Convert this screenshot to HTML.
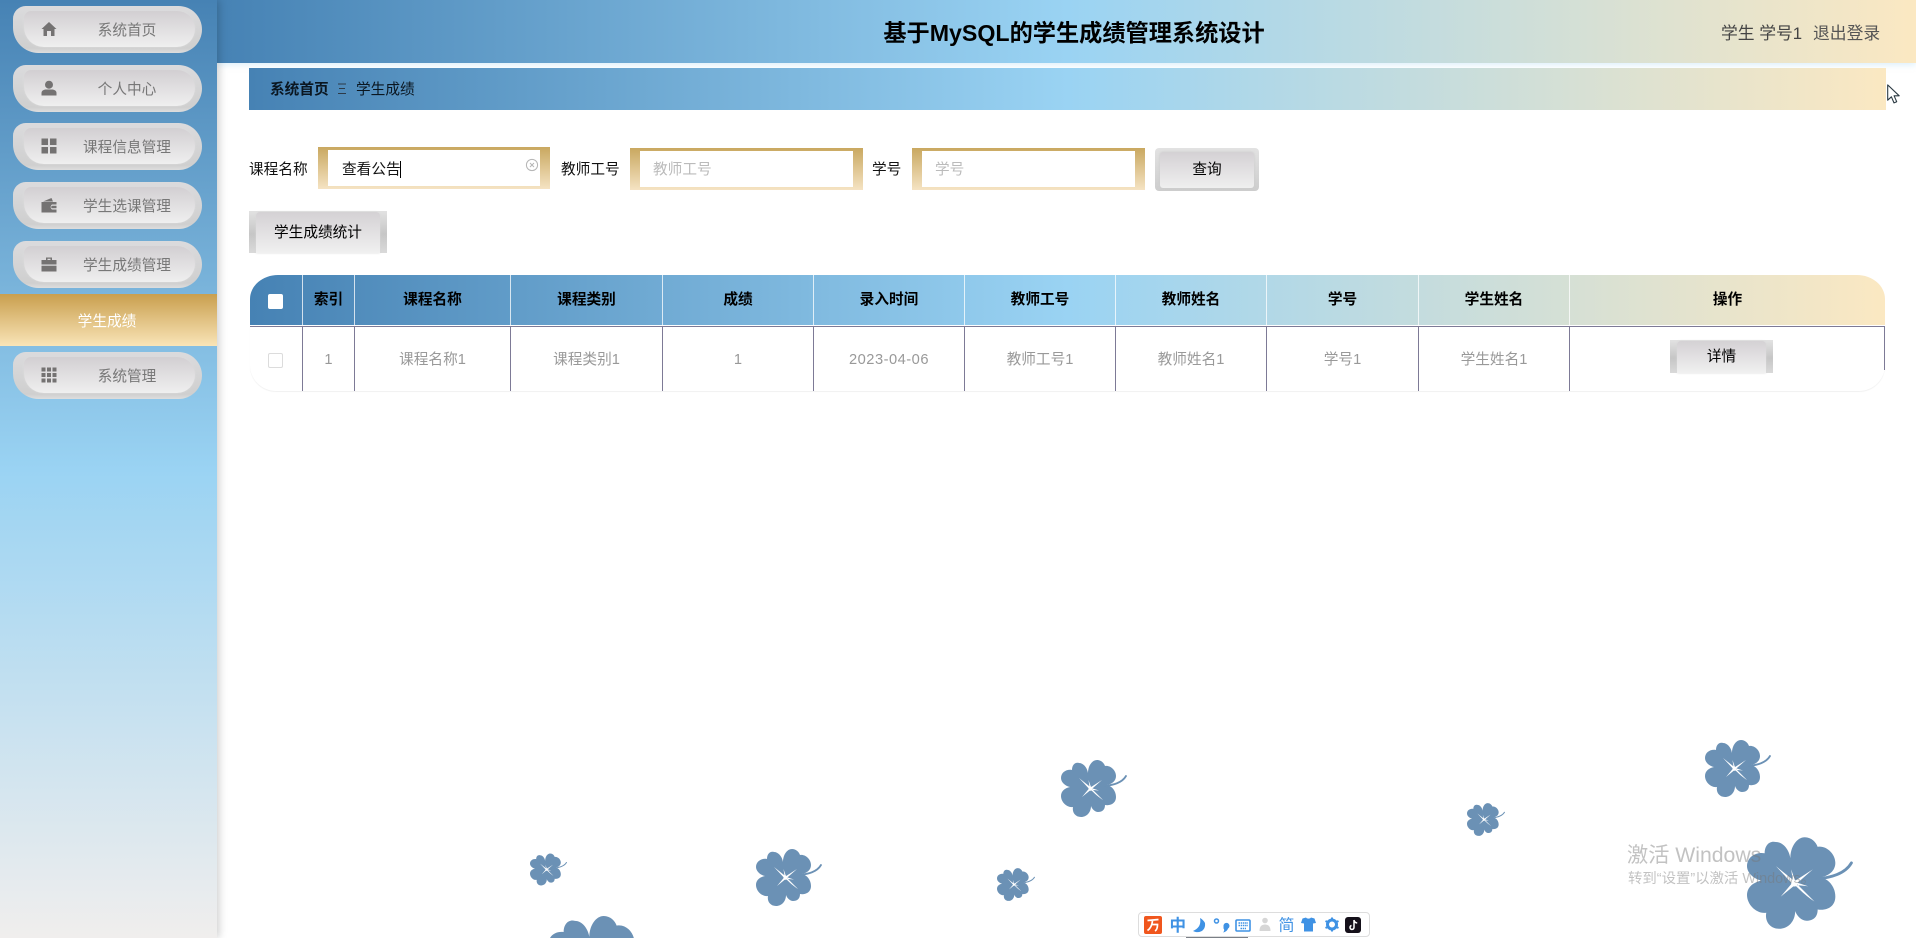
<!DOCTYPE html>
<html lang="zh"><head><meta charset="utf-8"><title>学生成绩</title>
<style>
*{box-sizing:border-box;margin:0;padding:0}
html,body{width:1916px;height:938px;overflow:hidden;background:#fff}
body{position:relative;font-family:"Liberation Sans","Noto Sans CJK SC",sans-serif;font-size:14.67px;color:#000}
.a{position:absolute;white-space:nowrap}
#side{position:absolute;left:0;top:0;width:217px;height:938px;background:linear-gradient(180deg,#4682b4 0,#9ad3f3 50%,#f0eeed 100%);box-shadow:2px 0 8px rgba(0,0,0,.2)}
.grad{background:linear-gradient(90deg,#4682b4 0,#9ad3f3 50%,#fbe8c2 100%)}
.nav{position:absolute;left:13px;width:189px;height:47px;border-radius:13px 24px 24px 26px;background:linear-gradient(180deg,#dbdbdd,#cfcfcf 90%,#dedede)}
.nav::before{content:"";position:absolute;left:11px;top:5px;right:7px;bottom:6px;border-radius:8px 20px 20px 22px;background:linear-gradient(180deg,#d2cfd2,#efefef);box-shadow:0 0 2px #dcdcdc}
.nav span{position:absolute;left:0;top:0;width:228px;height:47px;line-height:50px;text-align:center;color:#777;z-index:1}
.nav svg{position:absolute;left:28px;top:15px;width:16px;height:16px;fill:#747272;z-index:1}
.inp{position:absolute;height:42px;background:linear-gradient(180deg,#c9a860,#f5e3c3)}
.inp i{position:absolute;left:10px;right:10px;top:3px;bottom:3px;background:#fff}
.ph{color:#bbb}
.bev{position:absolute;background:linear-gradient(180deg,#e2e2e2,#c6c6c6 55%,#d9d9d9)}
.bev::before{content:"";position:absolute;left:7px;right:7px;top:1px;bottom:0;border-radius:4px 4px 0 0;background:linear-gradient(180deg,#d4d1d4,#f0f0f0);box-shadow:0 0 2px #d8d8d8}
.bev span{position:absolute;left:0;right:0;top:0;bottom:0;text-align:center;z-index:1}
.th,.td{position:absolute;text-align:center;white-space:nowrap}
.th{top:275px;height:50px;line-height:50px;font-weight:700;border-right:1px solid rgba(255,255,255,.75)}
.td{top:327px;height:64px;line-height:67px;color:#999;border-right:1.2px solid #7d7a96}
</style></head><body>
<svg width="0" height="0" style="position:absolute"><defs>
<symbol id="fl" viewBox="0 0 66 57">
<path fill="#6b91b5" d="M27 13C27 6 31 0 36 0C40 0 43 3 44 6C49 5 55 10 55 16C55 21 51 24 46 25C51 26 55 31 55 37C55 43 50 46 44 45C44 50 41 52 37 52C34 52 31 49 30 46C30 52 26 57 20 57C14 57 11 52 12 47C6 48 0 42 0 36C0 31 4 28 9 27C4 26 0 22 0 18C0 12 6 9 11 10C11 5 14 2 18 3C22 3 26 7 27 13Z"/>
<path fill="none" stroke="#6b91b5" stroke-width="1.8" stroke-linecap="round" d="M44 26C52 25 61 23 65 16"/>
<path fill="#fff" d="M18 18L30.200 27.800L28.600 29.400ZM41 20L30.200 29.500L28.800 27.900ZM21 37L30.200 29.500L28.500 28ZM42 40C38 37.500 33 33 29 29L30 28C34 32 38 36 42 40ZM38 30.500L29.500 27.700V29.700ZM27.500 20L30.300 28H28.700Z"/>
<circle cx="29.500" cy="28.700" r="2" fill="#fff"/>
</symbol></defs></svg>

<div class="a grad" style="left:217px;top:0;width:1699px;height:63px;box-shadow:0 2px 6px rgba(154,211,243,.35)"></div>
<div class="a" style="left:882px;top:15px;font-size:23.200px;line-height:36px;font-weight:700;width:384px;text-align:center">基于MySQL的学生成绩管理系统设计</div>
<div class="a" style="left:1721px;top:21px;font-size:16.800px;line-height:25px;color:#444">学生 学号1</div>
<div class="a" style="left:1813px;top:21px;font-size:16.800px;line-height:25px;color:#555">退出登录</div>

<div class="a grad" style="left:249px;top:68px;width:1637px;height:42px"></div>
<div class="a" style="left:270px;top:79px;line-height:22px;font-weight:700;color:#0a1620">系统首页</div>
<svg class="a" style="left:338px;top:83px" width="9" height="12"><path d="M0 1H8M1 5.500H7M0 10.500H8" stroke="#2d3a48" stroke-width="1"/></svg>
<div class="a" style="left:356px;top:79px;line-height:22px;color:#0a1620">学生成绩</div>

<svg class="a" style="left:1887px;top:84px" width="14" height="20" viewBox="0 0 14 20"><path d="M.7.900V16.200L4.400 12.800 7 18.900 9.700 17.700 7.100 11.800H12.200Z" fill="#fff" stroke="#2b3a42" stroke-width="1.100" stroke-linejoin="round"/></svg>

<!-- search row -->
<div class="a" style="left:249px;top:159px;line-height:22px;color:#111">课程名称</div>
<div class="inp" style="left:318px;top:147px;width:232px"><i></i></div>
<div class="a" style="left:342px;top:159px;line-height:22px;color:#111">查看公告</div>
<div class="a" style="left:399.500px;top:161px;width:1px;height:17px;background:#000"></div>
<svg class="a" style="left:525px;top:158px" width="14" height="14" viewBox="0 0 14 14"><circle cx="7" cy="7" r="5.600" fill="none" stroke="#b5b5b5" stroke-width="1"/><path d="M5 5L9 9M9 5L5 9" stroke="#b5b5b5" stroke-width="1"/></svg>
<div class="a" style="left:561px;top:159px;line-height:22px;color:#111">教师工号</div>
<div class="inp" style="left:630px;top:148px;width:233px"><i></i></div>
<div class="a ph" style="left:653px;top:159px;line-height:22px">教师工号</div>
<div class="a" style="left:872px;top:159px;line-height:22px;color:#111">学号</div>
<div class="inp" style="left:912px;top:148px;width:233px"><i></i></div>
<div class="a ph" style="left:935px;top:159px;line-height:22px">学号</div>

<div class="a" style="left:1155px;top:148px;width:104px;height:43px;border-radius:4px;background:linear-gradient(180deg,#e2e2e2,#cdcdcd)"></div>
<div class="a" style="left:1160px;top:152px;width:94px;height:36px;border-radius:3px;background:linear-gradient(180deg,#d4d1d4,#efefef);box-shadow:0 0 2px #c9c9c9"></div>
<div class="a" style="left:1155px;top:159px;width:104px;text-align:center;line-height:22px">查询</div>

<div class="bev" style="left:249px;top:211px;width:138px;height:42px"><span style="line-height:44px">学生成绩统计</span></div>

<!-- table -->
<div class="a" style="left:250px;top:275px;width:1635px;height:50px;border-radius:28px 28px 0 0/24px 24px 0 0;background:linear-gradient(90deg,#4682b4 0,#9ad3f3 50%,#fbe8c2 100%)"></div>
<div class="a" style="left:250px;top:325px;width:1635px;height:66px;border-radius:0 0 26px 26px;box-shadow:0 1px 1px rgba(0,0,0,.06);background:#fff"></div>
<div class="a" style="left:250px;top:326px;width:1635px;height:1.300px;background:#7d7a96"></div>
<div class="a" style="left:1884px;top:326px;width:1.200px;height:44px;background:#7d7a96"></div>

<div class="a" style="left:268px;top:294px;width:15px;height:15px;border-radius:2px;background:#fff"></div>
<div class="a" style="left:268px;top:353px;width:15px;height:15px;border-radius:2px;background:#fff;border:1px solid #dcdcdc"></div>

<div class="th" style="left:250px;width:53px"></div>
<div class="th" style="left:303px;width:52px">索引</div>
<div class="th" style="left:355px;width:156px">课程名称</div>
<div class="th" style="left:511px;width:152px">课程类别</div>
<div class="th" style="left:663px;width:151px">成绩</div>
<div class="th" style="left:814px;width:151px">录入时间</div>
<div class="th" style="left:965px;width:151px">教师工号</div>
<div class="th" style="left:1116px;width:151px">教师姓名</div>
<div class="th" style="left:1267px;width:152px">学号</div>
<div class="th" style="left:1419px;width:151px">学生姓名</div>
<div class="th" style="left:1570px;width:315px;border-right:0">操作</div>

<div class="td" style="left:250px;width:53px"></div>
<div class="td" style="left:303px;width:52px">1</div>
<div class="td" style="left:355px;width:156px">课程名称1</div>
<div class="td" style="left:511px;width:152px">课程类别1</div>
<div class="td" style="left:663px;width:151px">1</div>
<div class="td" style="left:814px;width:151px;letter-spacing:.5px">2023-04-06</div>
<div class="td" style="left:965px;width:151px">教师工号1</div>
<div class="td" style="left:1116px;width:151px">教师姓名1</div>
<div class="td" style="left:1267px;width:152px">学号1</div>
<div class="td" style="left:1419px;width:151px">学生姓名1</div>
<div class="bev" style="left:1670px;top:340px;width:103px;height:33px"><span style="line-height:34px">详情</span></div>

<!-- flowers -->
<svg class="a" style="left:530px;top:853px" width="37" height="33"><use href="#fl" width="37" height="33"/></svg>
<svg class="a" style="left:756px;top:849px" width="66" height="57"><use href="#fl" width="66" height="57"/></svg>
<svg class="a" style="left:997px;top:868px" width="38" height="33"><use href="#fl" width="38" height="33"/></svg>
<svg class="a" style="left:1061px;top:760px" width="66" height="57"><use href="#fl" width="66" height="57"/></svg>
<svg class="a" style="left:1467px;top:803px" width="38" height="33"><use href="#fl" width="38" height="33"/></svg>
<svg class="a" style="left:1705px;top:740px" width="66" height="57"><use href="#fl" width="66" height="57"/></svg>
<svg class="a" style="left:1747px;top:837px" width="106" height="92"><use href="#fl" width="106" height="92"/></svg>
<svg class="a" style="left:546px;top:916px" width="106" height="22" viewBox="0 0 66 13.700" preserveAspectRatio="none"><path fill="#6b91b5" d="M2.500 13.700C4 11 7.500 9.500 11 10C11 5 14 2 18 3C22 3 26 7 27 13C27 6 31 0 36 0C40 0 43 3 44 6C49 5 53.500 9 54.700 13.700Z"/></svg>
<div class="a" style="left:1186px;top:934px;width:62px;height:4px;background:#7a7f86;border-radius:3px 3px 0 0"></div>

<!-- watermark -->
<div class="a" style="left:1627px;top:842px;font-size:21.200px;line-height:27px;color:rgba(120,120,120,.45)">激活 Windows</div>
<div class="a" style="left:1628px;top:870px;font-size:14.400px;line-height:19px;color:rgba(120,120,120,.45)">转到“设置”以激活 Windows。</div>

<!-- IME -->
<div class="a" style="left:1138px;top:912px;width:232px;height:25px;background:#fff;border:1px solid #ddd;border-radius:4px"></div>
<svg class="a" style="left:1144px;top:916px" width="222" height="19" viewBox="0 0 222 19">
<rect x="0" y="0" width="18" height="18" rx="2" fill="#f0561d"/>
<path d="M3.500 4.500L14.500 3.500M7.500 8.500H13.500C13.500 11 13 14 11 15M8.500 5C8 9 6.500 12.500 3.500 14.500" fill="none" stroke="#fff" stroke-width="1.700"/>
<text x="25.500" y="15" font-size="16.500" fill="#3f92e4" font-family="Noto Sans CJK SC" font-weight="700">中</text>
<path d="M56 2C57 7 56 12 49 15C55 18 62 15 61 7C60 5 58 3 56 2Z" fill="#3f92e4"/>
<circle cx="72.500" cy="5" r="2" fill="none" stroke="#3f92e4" stroke-width="1.500"/>
<path d="M79.500 9.500a3 3 0 1 1 4.500 3C83.500 14.500 81.500 16 79 16.500C80.500 15 80.500 13.500 79.500 12.500Z" fill="#3f92e4"/>
<rect x="92" y="4" width="14" height="11" rx="1" fill="none" stroke="#3f92e4" stroke-width="1.600"/>
<path d="M94.500 7H104M94.500 9.500H104M96.500 12.500H102" stroke="#3f92e4" stroke-width="1.500" stroke-dasharray="1.500 .7"/>
<circle cx="121" cy="4.500" r="2.800" fill="#d6d6d6"/><path d="M115.500 15C115.500 10 118 8.500 121 8.500S126.500 10 126.500 15Z" fill="#d6d6d6"/>
<text x="134.500" y="14.500" font-size="16" fill="#3f92e4" font-family="Noto Sans CJK SC">简</text>
<path d="M158.500 2.500L162 1.500C163 3 166 3 167 1.500L170.500 2.500L172 7L169 7.500V15.500H160V7.500L157 7Z" fill="#3f92e4"/>
<circle cx="188" cy="8.500" r="4.500" fill="none" stroke="#3f92e4" stroke-width="3"/>
<path d="M188 1.500V3.500M188 13.500V15.500M181.500 5L183.500 6M192.500 11L194.500 12M181.500 12L183.500 11M192.500 6L194.500 5" stroke="#3f92e4" stroke-width="2"/>
<rect x="201" y="1" width="16" height="16" rx="3" fill="#15101a"/>
<path d="M210 4V11.500A2 2 0 1 1 207.500 9.500M210 4C210.200 5.800 211.300 6.800 213.200 7" fill="none" stroke="#fff" stroke-width="1.500"/>
</svg>

<!-- sidebar -->
<div id="side">
<div class="nav" style="top:6px"><svg viewBox="0 0 16 16"><path d="M8 1L15.500 8H13.500V15H10V10H6V15H2.500V8H.5Z"/></svg><span>系统首页</span></div>
<div class="nav" style="top:65px"><svg viewBox="0 0 16 16"><circle cx="8" cy="4.700" r="4"/><path d="M.5 15.500V13C.5 10.500 3 9.500 5 9.500H11C13 9.500 15.500 10.500 15.500 13V15.500Z"/></svg><span>个人中心</span></div>
<div class="nav" style="top:123px"><svg viewBox="0 0 16 16"><rect x=".5" y=".5" width="6.500" height="6.500"/><rect x="9" y=".5" width="6.500" height="6.500"/><rect x=".5" y="9" width="6.500" height="6.500"/><rect x="9" y="9" width="6.500" height="6.500"/></svg><span>课程信息管理</span></div>
<div class="nav" style="top:182px"><svg viewBox="0 0 16 16"><path d="M2 4.500L10.500 1L12 4.500Z"/><path fill-rule="evenodd" d="M.5 5H15.500V7.500H11A3 3 0 0 0 11 12.500H15.500V15.500H.5ZM11.500 8.700H15.500V11.300H11.500A1.300 1.300 0 0 1 11.500 8.700Z"/></svg><span>学生选课管理</span></div>
<div class="nav" style="top:241px"><svg viewBox="0 0 16 16"><path fill-rule="evenodd" d="M5 4V1.500H11V4H15.500V8.500H.5V4ZM6.500 2.800V4H9.500V2.800Z"/><path d="M.5 9.700H15.500V15.500H.5Z"/></svg><span>学生成绩管理</span></div>
<div class="a" style="left:0;top:294px;width:217px;height:52px;line-height:57px;padding-right:3px;background:linear-gradient(180deg,#c99f4e,#f9e4b7);color:#fff;text-align:center">学生成绩</div>
<div class="nav" style="top:352px"><svg viewBox="0 0 16 16"><path d="M.5 .5H4.500V4.500H.5ZM6 .5H10V4.500H6ZM11.500 .5H15.500V4.500H11.500ZM.5 6H4.500V10H.5ZM6 6H10V10H6ZM11.500 6H15.500V10H11.500ZM.5 11.500H4.500V15.500H.5ZM6 11.500H10V15.500H6ZM11.500 11.500H15.500V15.500H11.500Z"/></svg><span>系统管理</span></div>
</div>
</body></html>
